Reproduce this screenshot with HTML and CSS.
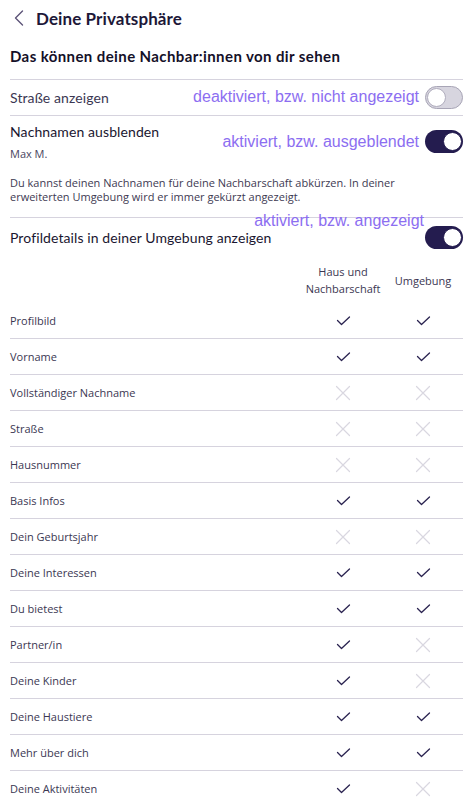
FILE: index.html
```html
<!DOCTYPE html>
<html lang="de">
<head>
<meta charset="utf-8">
<link rel="stylesheet" href="styles.css">
</head>
<body>
<svg width="0" height="0" class="defs">
  <defs>
    <symbol id="chk" viewBox="0 0 14 10"><path d="M1 4.5 L5 8.5 L13 1" fill="none" stroke="#2a2350" stroke-width="1.3" stroke-linecap="round" stroke-linejoin="round"/></symbol>
    <symbol id="x" viewBox="0 0 16 16"><path d="M1.5 1.5 L14.5 14.5 M14.5 1.5 L1.5 14.5" fill="none" stroke="#d9d7e0" stroke-width="1.2" stroke-linecap="round"/></symbol>
  </defs>
</svg>
<div class="page">
  <header class="topbar">
    <svg class="back" width="10" height="16" viewBox="0 0 10 16"><path d="M8.5 1 L1.5 8 L8.5 15" fill="none" stroke="#5d5478" stroke-width="1.4" stroke-linecap="round" stroke-linejoin="round"/></svg>
    <h1>Deine Privatsphäre</h1>
  </header>
  <h2 class="section-title">Das können deine Nachbar:innen von dir sehen</h2>

  <div class="setting s1">
    <span class="label">Straße anzeigen</span>
    <span class="note n1">deaktiviert, bzw. nicht angezeigt</span>
    <span class="toggle off"><span class="knob"></span></span>
  </div>

  <div class="setting s2">
    <div class="s2-top">
      <div class="s2-text">
        <span class="label dark">Nachnamen ausblenden</span>
        <span class="sub">Max M.</span>
      </div>
      <span class="note n2">aktiviert, bzw. ausgeblendet</span>
      <span class="toggle on"><span class="knob"></span></span>
    </div>
    <p class="desc">Du kannst deinen Nachnamen für deine Nachbarschaft abkürzen. In deiner erweiterten Umgebung wird er immer gekürzt angezeigt.</p>
  </div>

  <div class="setting s3">
    <span class="label dark">Profildetails in deiner Umgebung anzeigen</span>
    <span class="note n3">aktiviert, bzw. angezeigt</span>
    <span class="toggle on"><span class="knob"></span></span>
  </div>

  <div class="table">
    <div class="thead">
      <span></span>
      <span class="col">Haus und<br>Nachbarschaft</span>
      <span class="col">Umgebung</span>
    </div>
    <div class="row"><span>Profilbild</span><svg class="ic c"><use href="#chk"/></svg><svg class="ic c"><use href="#chk"/></svg></div>
    <div class="row"><span>Vorname</span><svg class="ic c"><use href="#chk"/></svg><svg class="ic c"><use href="#chk"/></svg></div>
    <div class="row"><span>Vollständiger Nachname</span><svg class="ic x"><use href="#x"/></svg><svg class="ic x"><use href="#x"/></svg></div>
    <div class="row"><span>Straße</span><svg class="ic x"><use href="#x"/></svg><svg class="ic x"><use href="#x"/></svg></div>
    <div class="row"><span>Hausnummer</span><svg class="ic x"><use href="#x"/></svg><svg class="ic x"><use href="#x"/></svg></div>
    <div class="row"><span>Basis Infos</span><svg class="ic c"><use href="#chk"/></svg><svg class="ic c"><use href="#chk"/></svg></div>
    <div class="row"><span>Dein Geburtsjahr</span><svg class="ic x"><use href="#x"/></svg><svg class="ic x"><use href="#x"/></svg></div>
    <div class="row"><span>Deine Interessen</span><svg class="ic c"><use href="#chk"/></svg><svg class="ic c"><use href="#chk"/></svg></div>
    <div class="row"><span>Du bietest</span><svg class="ic c"><use href="#chk"/></svg><svg class="ic c"><use href="#chk"/></svg></div>
    <div class="row"><span>Partner/in</span><svg class="ic c"><use href="#chk"/></svg><svg class="ic x"><use href="#x"/></svg></div>
    <div class="row"><span>Deine Kinder</span><svg class="ic c"><use href="#chk"/></svg><svg class="ic x"><use href="#x"/></svg></div>
    <div class="row"><span>Deine Haustiere</span><svg class="ic c"><use href="#chk"/></svg><svg class="ic c"><use href="#chk"/></svg></div>
    <div class="row"><span>Mehr über dich</span><svg class="ic c"><use href="#chk"/></svg><svg class="ic c"><use href="#chk"/></svg></div>
    <div class="row"><span>Deine Aktivitäten</span><svg class="ic c"><use href="#chk"/></svg><svg class="ic x"><use href="#x"/></svg></div>
  </div>
</div>
</body>
</html>
```

FILE: styles.css
```css
* { box-sizing: border-box; }
html, body { margin: 0; padding: 0; background: #fff; }
body {
  font-family: "Lato", "Noto Sans", sans-serif;
  color: #1c1733;
  width: 471px;
  overflow: hidden;
}
.defs { position: absolute; }
.page { padding: 0 8px 0 10px; }

.topbar {
  height: 37px;
  display: flex;
  align-items: center;
}
.back { margin-left: 4px; margin-right: 12px; margin-top: -1px; }
.topbar h1 {
  margin: 0;
  font-size: 17px;
  font-weight: 700;
  color: #1d1838;
  letter-spacing: 0.1px;
}
.section-title {
  margin: 0;
  height: 42px;
  padding-top: 10px;
  font-size: 15px;
  font-weight: 700;
  color: #141028;
  letter-spacing: 0.4px;
}

.setting {
  position: relative;
  border-top: 1px solid #d6d3de;
}
.s1 {
  height: 36px;
  display: flex;
  align-items: center;
  justify-content: space-between;
}
.label { font-size: 14px; color: #3b3752; letter-spacing: 0.1px; }
.label.dark { color: #1a1630; }
.s2 { height: 102px; }
.s2-top {
  display: flex;
  align-items: center;
  justify-content: space-between;
  padding-top: 6px;
}
.s2-text { display: flex; flex-direction: column; }
.s2-text .label { line-height: 19px; }
.sub {
  font-family: "Open Sans", "Noto Sans", sans-serif;
  font-size: 11px; color: #4a4560; margin-top: 5px; line-height: 15px;
}
.desc {
  font-family: "Open Sans", "Noto Sans", sans-serif;
  margin: 15px 0 0;
  padding-right: 40px;
  font-size: 11px;
  line-height: 14px;
  color: #3e3a52;
}
.s3 {
  height: 40px;
  display: flex;
  align-items: center;
  justify-content: space-between;
}

.toggle {
  width: 38px;
  height: 23px;
  border-radius: 12px;
  display: flex;
  align-items: center;
  flex: none;
}
.toggle.off { background: #d7d5df; border: 1px solid #a8a5b6; justify-content: flex-start; padding: 1px; }
.toggle.off .knob { width: 19px; height: 19px; border-radius: 50%; background: #fff; border: 1px solid #b0adbd; }
.toggle.on { background: #241c4f; justify-content: flex-end; padding: 2px 1px; }
.toggle.on .knob { width: 19px; height: 19px; border-radius: 50%; background: #fff; border: 1px solid #241c4f; }

.note {
  position: absolute;
  font-family: "Liberation Sans", Arial, sans-serif;
  font-size: 16px;
  color: #8c6ef1;
  white-space: nowrap;
}
.n1 { right: 44px; top: 8px; }
.n2 { right: 44px; top: 17px; }
.n3 { right: 39px; top: -6px; }

.thead {
  display: grid;
  grid-template-columns: 1fr 80px 80px;
  height: 46px;
  align-items: start;
  padding-top: 6px;
}
.thead .col {
  font-family: "Open Sans", "Noto Sans", sans-serif;
  font-size: 11px;
  line-height: 17px;
  color: #3b3752;
  text-align: center;
}
.thead .col:nth-child(3) { padding-top: 9px; }
.row {
  display: grid;
  grid-template-columns: 1fr 80px 80px;
  height: 36px;
  align-items: center;
  border-bottom: 1px solid #d6d3de;
  font-family: "Open Sans", "Noto Sans", sans-serif;
  font-size: 11px;
  color: #3b3752;
}
.ic { justify-self: center; }
.ic.c { width: 15px; height: 10px; }
.ic.x { width: 16px; height: 16px; }
```
